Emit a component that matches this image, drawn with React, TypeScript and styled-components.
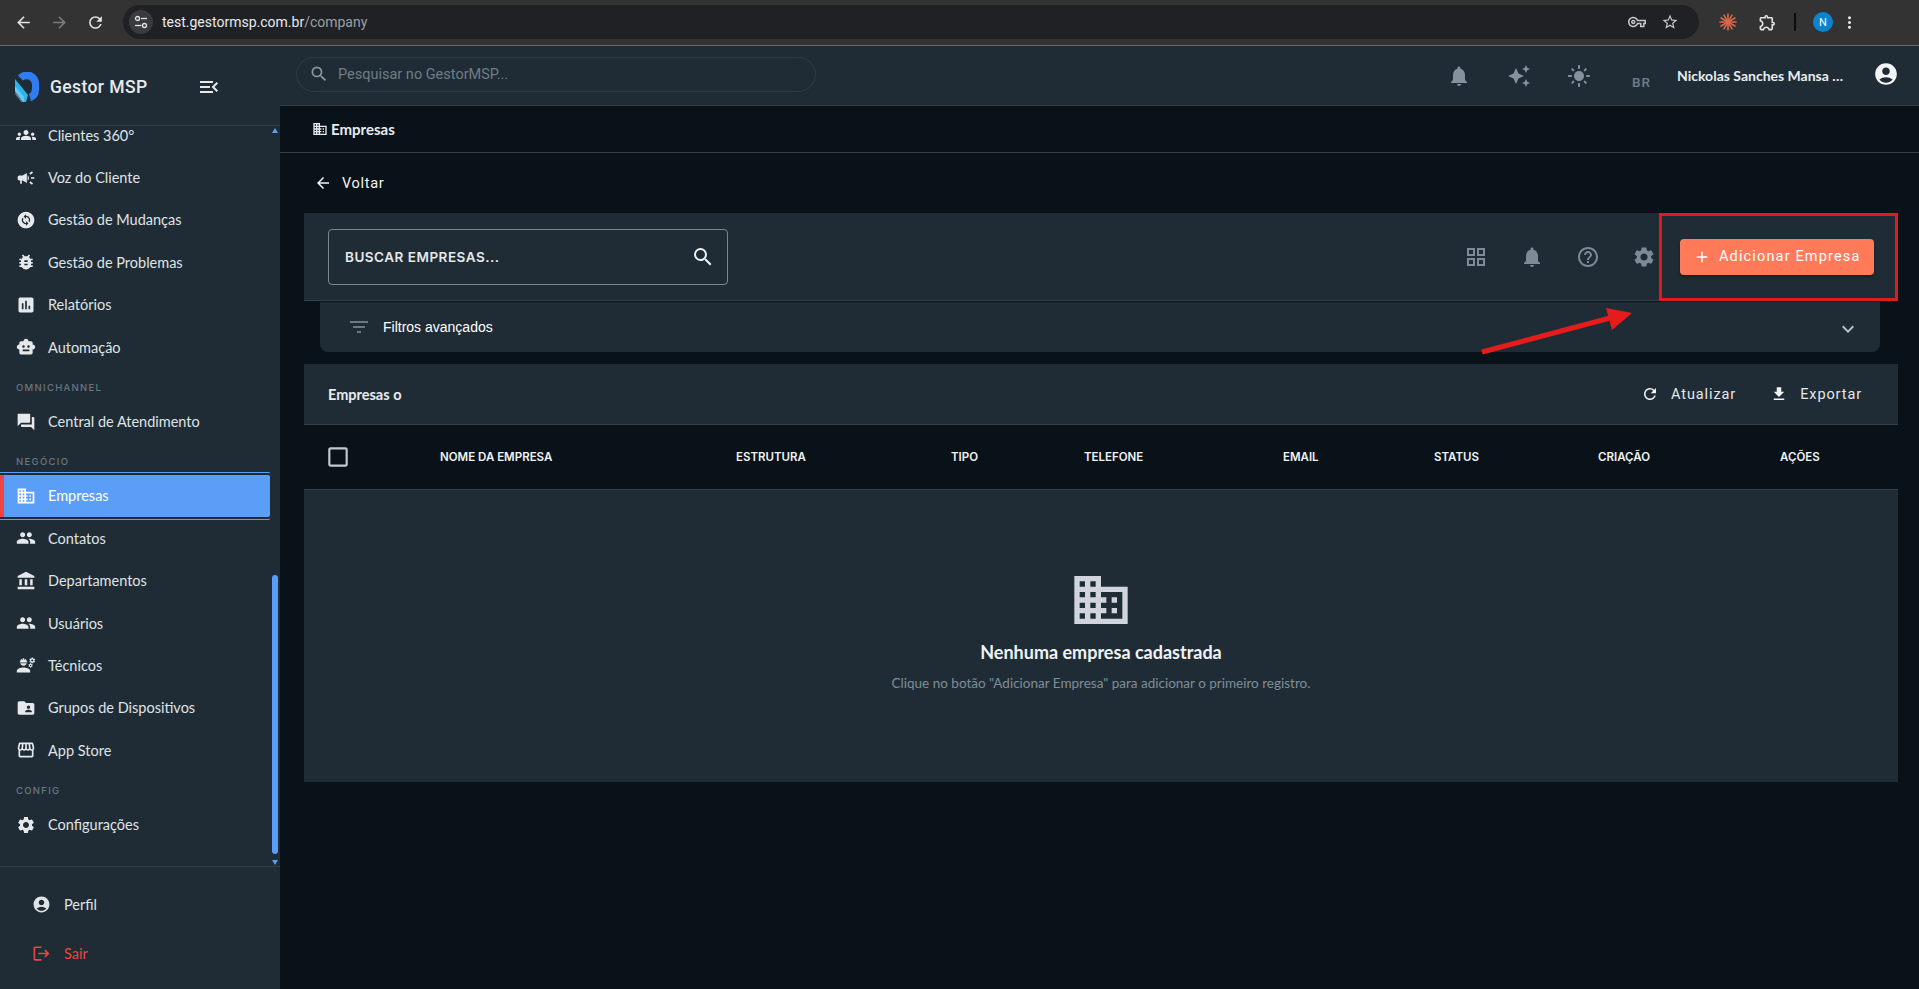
import React from 'react'
import styled, { createGlobalStyle } from 'styled-components'
import {
  MdAccountBalance,
  MdAccountCircle,
  MdAdd,
  MdArrowBack,
  MdAssessment,
  MdAutoAwesome,
  MdBugReport,
  MdBusiness,
  MdCampaign,
  MdChangeCircle,
  MdCheckBoxOutlineBlank,
  MdEngineering,
  MdExpandMore,
  MdFileDownload,
  MdFilterList,
  MdFolderShared,
  MdForum,
  MdGridView,
  MdHelpOutline,
  MdLightMode,
  MdLogout,
  MdMenuOpen,
  MdMoreVert,
  MdNotifications,
  MdOutlineExtension,
  MdOutlineVpnKey,
  MdPeople,
  MdRefresh,
  MdSearch,
  MdSettings,
  MdSmartToy,
  MdStarBorder,
  MdStorefront,
  MdArrowForward,
  MdGroups,
} from 'react-icons/md'

const BODY_FONT = `'Lato', 'Noto Sans', sans-serif`
const PANEL = '#202c35'
const PAGE = '#0a1219'
const LINE = '#33404a'

const GlobalStyle = createGlobalStyle`
  html, body {
    margin: 0;
    padding: 0;
    height: 100%;
    overflow: hidden;
    background: ${PAGE};
  }
  * { box-sizing: border-box; }
`

const Frame = styled.div`
  display: flex;
  flex-direction: column;
  position: relative;
  width: 1919px;
  height: 989px;
  overflow: hidden;
  font-family: ${BODY_FONT};
`

/* browser chrome */
const BrowserBar = styled.div`
  display: flex;
  align-items: center;
  height: 46px;
  padding: 5px 0 6px 11px;
  background: #333333;
  border-bottom: 1px solid #6b6b6b;
  flex: none;
`

const NavIcon = styled.span<{ $dim?: boolean }>`
  display: flex;
  align-items: center;
  justify-content: center;
  width: 24px;
  margin-right: 12px;
  font-size: 19px;
  color: ${p => (p.$dim ? '#7d7d7d' : '#e3e3e3')};
`

const AddressBar = styled.div`
  display: flex;
  align-items: center;
  width: 1576px;
  height: 34px;
  margin-left: 4px;
  padding: 0 16px 0 6px;
  border-radius: 17px;
  background: #202124;
  font-family: 'Roboto', sans-serif;
  font-size: 14px;
  color: #e8eaed;
`

const SiteChip = styled.span`
  display: flex;
  align-items: center;
  justify-content: center;
  width: 24px;
  height: 24px;
  margin-right: 9px;
  border-radius: 50%;
  background: #3a3b3e;
`

const UrlPath = styled.span`
  color: #9aa0a6;
`

const AddressActions = styled.div`
  display: flex;
  align-items: center;
  gap: 15px;
  margin-left: auto;
  padding-right: 4px;
  font-size: 18px;
  color: #c7c7c7;
`

const BrowserTools = styled.div`
  display: flex;
  align-items: center;
  margin-left: 20px;
`

const ToolDivider = styled.span`
  width: 2px;
  height: 18px;
  margin: 0 17px 0 15px;
  background: #0c0c0c;
`

const ProfileBadge = styled.span`
  display: flex;
  align-items: center;
  justify-content: center;
  width: 20px;
  height: 20px;
  border-radius: 50%;
  background: #0b84d0;
  color: #ffffff;
  font-family: 'Roboto', sans-serif;
  font-size: 11px;
`

/* app shell */
const Shell = styled.div`
  display: flex;
  flex: 1;
  min-height: 0;
`

const Sidebar = styled.aside`
  display: flex;
  flex-direction: column;
  width: 280px;
  flex: none;
  background: ${PANEL};
`

const Brand = styled.div`
  display: flex;
  align-items: center;
  height: 80px;
  padding: 2px 0 0 15px;
  border-bottom: 1px solid ${LINE};
  flex: none;
`

const BrandName = styled.span`
  margin-left: 11px;
  font-family: 'Roboto', sans-serif;
  font-size: 17.5px;
  font-weight: 500;
  letter-spacing: 0.4px;
  color: #e6eaed;
`

const BrandToggle = styled.span`
  display: flex;
  margin-left: 50px;
  font-size: 24px;
  color: #e6eaed;
`

const NavScroll = styled.nav`
  position: relative;
  flex: 1;
  min-height: 0;
  overflow: hidden;
  border-bottom: 1px solid ${LINE};
`

const NavList = styled.div`
  display: flex;
  flex-direction: column;
  margin-top: -12px;
`

const NavItem = styled.div<{ $active?: boolean }>`
  position: relative;
  display: flex;
  align-items: center;
  gap: 12px;
  width: 270px;
  height: 42.4px;
  padding-left: 16px;
  font-size: 14.5px;
  color: ${p => (p.$active ? '#ffffff' : '#dfe3e6')};
  background: ${p => (p.$active ? '#5b9ef8' : 'transparent')};
  ${p =>
    p.$active &&
    `
    border-left: 4px solid #ef4444;
    padding-left: 12px;
    border-radius: 0 2px 2px 0;
    outline: 1px solid #5b9ef8;
    outline-offset: 2px;
    clip-path: inset(-3px 0 -3px 0);
  `}
  svg {
    flex: none;
    font-size: 20px;
    color: ${p => (p.$active ? '#ffffff' : '#e6e9ec')};
  }
`

const NavSection = styled.div`
  display: flex;
  align-items: center;
  height: 32px;
  padding: 6px 0 0 16px;
  font-family: 'Inter', sans-serif;
  font-size: 9.5px;
  font-weight: 500;
  letter-spacing: 1.3px;
  color: #6b7680;
`

const ScrollThumb = styled.span`
  position: absolute;
  top: 449px;
  right: 2px;
  width: 6px;
  height: 279px;
  border-radius: 3px;
  background: #5b9ef8;
`

const ScrollArrow = styled.span<{ $down?: boolean }>`
  position: absolute;
  right: 2px;
  ${p => (p.$down ? 'bottom: 1px;' : 'top: 2px;')}
  width: 0;
  height: 0;
  border-left: 3px solid transparent;
  border-right: 3px solid transparent;
  ${p => (p.$down ? 'border-top: 5px solid #5b9ef8;' : 'border-bottom: 5px solid #5b9ef8;')}
`

const SideFooter = styled.div`
  display: flex;
  flex-direction: column;
  height: 122px;
  padding: 16px 0 0 32px;
  gap: 7px;
  flex: none;
`

const FooterItem = styled.div<{ $danger?: boolean }>`
  display: flex;
  align-items: center;
  gap: 13px;
  height: 42px;
  font-size: 14.5px;
  color: ${p => (p.$danger ? '#ef4444' : '#dfe3e6')};
  svg {
    font-size: 19px;
  }
`

const Main = styled.main`
  display: flex;
  flex-direction: column;
  flex: 1;
  min-width: 0;
`

const TopBar = styled.header`
  display: flex;
  align-items: center;
  height: 60px;
  padding: 0 20px 0 16px;
  background: ${PANEL};
  border-bottom: 1px solid ${LINE};
  flex: none;
`

const GlobalSearch = styled.div`
  display: flex;
  align-items: center;
  gap: 9px;
  width: 520px;
  height: 35px;
  margin-top: -3px;
  padding-left: 12px;
  border: 1px solid #2f3c46;
  border-radius: 18px;
  font-family: 'Roboto', sans-serif;
  font-size: 14.5px;
  color: #6f7c87;
  svg {
    font-size: 20px;
    color: #8a96a0;
  }
`

const TopActions = styled.div`
  display: flex;
  align-items: center;
  margin-left: auto;
`

const TopIcon = styled.span`
  display: flex;
  width: 24px;
  margin-left: 36px;
  font-size: 24px;
  color: #84929e;
`

const Locale = styled.span`
  margin: 12px 0 0 41px;
  font-family: 'Roboto', sans-serif;
  font-size: 13.5px;
  font-weight: 500;
  letter-spacing: 1px;
  color: #6f7d89;
`

const UserName = styled.span`
  width: 176px;
  margin-left: 26px;
  overflow: hidden;
  font-size: 14px;
  font-weight: 700;
  white-space: nowrap;
  text-overflow: ellipsis;
  color: #e9edf0;
`

const UserIcon = styled.span`
  display: flex;
  margin: -4px 0 0 20px;
  font-size: 26px;
  color: #f2f4f6;
`

const Crumb = styled.div`
  display: flex;
  align-items: center;
  gap: 3px;
  height: 47px;
  padding-left: 32px;
  border-bottom: 1px solid ${LINE};
  font-size: 15px;
  font-weight: 700;
  color: #e8ecef;
  flex: none;
  svg {
    font-size: 16px;
  }
`

const Content = styled.div`
  display: flex;
  flex-direction: column;
  flex: 1;
  padding: 0 21px 0 24px;
`

const BackLink = styled.div`
  display: flex;
  align-items: center;
  gap: 10px;
  height: 60px;
  padding-left: 10px;
  font-family: 'Roboto', sans-serif;
  font-size: 14.5px;
  letter-spacing: 0.7px;
  color: #f2f4f6;
  svg {
    font-size: 18px;
  }
`

const Toolbar = styled.section`
  display: flex;
  align-items: center;
  height: 88px;
  padding: 0 24px;
  background: ${PANEL};
  border-bottom: 1px solid ${LINE};
`

const CompanySearch = styled.div`
  display: flex;
  align-items: center;
  justify-content: space-between;
  width: 400px;
  height: 56px;
  padding: 0 12px 0 16px;
  border: 1px solid #7b858d;
  border-radius: 4px;
  font-family: 'Inter', sans-serif;
  font-size: 13.5px;
  font-weight: 600;
  letter-spacing: 0.5px;
  color: #e4e8eb;
  svg {
    font-size: 24px;
    color: #eef1f3;
  }
`

const ToolbarActions = styled.div`
  display: flex;
  align-items: center;
  margin-left: auto;
`

const ToolIcon = styled.span`
  display: flex;
  justify-content: center;
  width: 24px;
  margin-right: 32px;
  font-size: 24px;
  color: #7d8b96;
`

const AddButton = styled.button`
  display: flex;
  align-items: center;
  gap: 8px;
  width: 194px;
  height: 36px;
  padding: 0 0 0 13px;
  margin: 0 0 0 -8px;
  border: 0;
  border-radius: 4px;
  background: #ff7a59;
  box-shadow: 0 2px 3px rgba(0, 0, 0, 0.35);
  font-family: 'Roboto', sans-serif;
  font-size: 14.5px;
  letter-spacing: 1.15px;
  color: #ffffff;
  svg {
    font-size: 18px;
  }
`

const FilterBar = styled.div`
  display: flex;
  align-items: center;
  height: 50px;
  margin: 1px 18px 0 16px;
  padding: 0 20px 0 27px;
  border-radius: 0 0 8px 8px;
  background: ${PANEL};
  font-family: 'Liberation Sans', sans-serif;
  font-size: 14px;
  color: #ffffff;
  svg {
    font-size: 24px;
  }
`

const FilterIcon = styled.span`
  display: flex;
  margin-right: 12px;
  color: #6d7882;
`

const FilterChevron = styled.span`
  display: flex;
  margin: 4px 0 0 auto;
  color: #b8c0c6;
`

const TableTitleBar = styled.section`
  display: flex;
  align-items: center;
  height: 61px;
  margin-top: 12px;
  padding: 0 24px;
  background: ${PANEL};
  border-bottom: 1px solid ${LINE};
`

const TableTitle = styled.span`
  font-size: 14.5px;
  font-weight: 700;
  color: #e8ecef;
`

const TableActions = styled.div`
  display: flex;
  gap: 34px;
  margin-left: auto;
  padding-right: 12px;
`

const TextAction = styled.span`
  display: flex;
  align-items: center;
  gap: 12px;
  font-family: 'Roboto', sans-serif;
  font-size: 14.5px;
  letter-spacing: 0.9px;
  color: #e4e8eb;
  svg {
    font-size: 18px;
    color: #f2f4f6;
  }
`

const HeadRow = styled.div`
  display: grid;
  grid-template-columns: 136px 296px 215px 133px 199px 151px 164px 182px 118px;
  align-items: center;
  height: 65px;
  border-bottom: 1px solid ${LINE};
`

const HeadCell = styled.span`
  font-family: 'Inter', sans-serif;
  font-size: 11.5px;
  font-weight: 600;
  color: #f0f3f5;
`

const CheckCell = styled.span`
  display: flex;
  padding-left: 21px;
  font-size: 26px;
  color: #c4c9cd;
`

const EmptyState = styled.section`
  display: flex;
  flex-direction: column;
  align-items: center;
  height: 292px;
  padding-top: 78px;
  background: ${PANEL};
`

const EmptyIcon = styled.span`
  display: flex;
  font-size: 64px;
  color: #d0d5dd;
`

const EmptyTitle = styled.h2`
  margin: 9px 0 0;
  font-size: 18px;
  font-weight: 700;
  color: #f0f3f5;
`

const EmptyHint = styled.p`
  margin: 12px 0 0;
  font-size: 13.5px;
  color: #7f8d98;
`

/* red marks someone drew over the screenshot */
const MarkBox = styled.div`
  position: absolute;
  left: 1659px;
  top: 213px;
  width: 239px;
  height: 88px;
  border: 3px solid #e01b1b;
`

const MarkArrow = styled.svg`
  position: absolute;
  left: 1470px;
  top: 295px;
`

const TuneGlyph = () => (
  <svg width="14" height="14" viewBox="0 0 14 14" fill="none" stroke="#e3e3e3" strokeWidth="1.3">
    <circle cx="3.5" cy="3.5" r="2" />
    <path d="M7 3.5h6" />
    <circle cx="10.5" cy="10.5" r="2" />
    <path d="M1 10.5h6.5" />
  </svg>
)

const SparkGlyph = () => (
  <svg width="18" height="18" viewBox="0 0 18 18" stroke="#d9694a" strokeWidth="1.6" strokeLinecap="round">
    {[0, 30, 60, 90, 120, 150].map(a => {
      const r = (a * Math.PI) / 180
      const dx = Math.cos(r) * 8
      const dy = Math.sin(r) * 8
      return <line key={a} x1={9 - dx} y1={9 - dy} x2={9 + dx} y2={9 + dy} />
    })}
  </svg>
)

const LogoMark = () => (
  <svg width="24" height="30" viewBox="0 0 24 30">
    <path d="M3 3.5A12 12 0 0 1 24 12v6a12 12 0 0 1-8 11.2L14 22a6 6 0 0 0 3-5v-5a5.5 5.5 0 0 0-9-3.5Z" fill="#2f7df0" />
    <path d="M0 7l13 16-2 7H8L0 19Z" fill="#2bb5f0" />
    <path d="M0 14l9 11v5H6l-6-8Z" fill="#d8f2fd" opacity="0.35" />
  </svg>
)

type MenuEntry = { section: string } | { label: string; icon: React.ReactNode; active?: boolean }

const menu: MenuEntry[] = [
  { label: 'Clientes 360°', icon: <MdGroups /> },
  { label: 'Voz do Cliente', icon: <MdCampaign /> },
  { label: 'Gestão de Mudanças', icon: <MdChangeCircle /> },
  { label: 'Gestão de Problemas', icon: <MdBugReport /> },
  { label: 'Relatórios', icon: <MdAssessment /> },
  { label: 'Automação', icon: <MdSmartToy /> },
  { section: 'OMNICHANNEL' },
  { label: 'Central de Atendimento', icon: <MdForum /> },
  { section: 'NEGÓCIO' },
  { label: 'Empresas', icon: <MdBusiness />, active: true },
  { label: 'Contatos', icon: <MdPeople /> },
  { label: 'Departamentos', icon: <MdAccountBalance /> },
  { label: 'Usuários', icon: <MdPeople /> },
  { label: 'Técnicos', icon: <MdEngineering /> },
  { label: 'Grupos de Dispositivos', icon: <MdFolderShared /> },
  { label: 'App Store', icon: <MdStorefront /> },
  { section: 'CONFIG' },
  { label: 'Configurações', icon: <MdSettings /> },
]

const columns = ['NOME DA EMPRESA', 'ESTRUTURA', 'TIPO', 'TELEFONE', 'EMAIL', 'STATUS', 'CRIAÇÃO', 'AÇÕES']

export default function App() {
  return (
    <Frame>
      <GlobalStyle />
      <BrowserBar>
        <NavIcon><MdArrowBack /></NavIcon>
        <NavIcon $dim><MdArrowForward /></NavIcon>
        <NavIcon><MdRefresh /></NavIcon>
        <AddressBar>
          <SiteChip><TuneGlyph /></SiteChip>
          test.gestormsp.com.br<UrlPath>/company</UrlPath>
          <AddressActions>
            <MdOutlineVpnKey />
            <MdStarBorder />
          </AddressActions>
        </AddressBar>
        <BrowserTools>
          <SparkGlyph />
          <NavIcon style={{ margin: '0 0 0 18px' }}><MdOutlineExtension /></NavIcon>
          <ToolDivider />
          <ProfileBadge>N</ProfileBadge>
          <NavIcon style={{ margin: '0 0 0 4px' }}><MdMoreVert /></NavIcon>
        </BrowserTools>
      </BrowserBar>
      <Shell>
        <Sidebar>
          <Brand>
            <LogoMark />
            <BrandName>Gestor MSP</BrandName>
            <BrandToggle><MdMenuOpen /></BrandToggle>
          </Brand>
          <NavScroll>
            <NavList>
              {menu.map(entry =>
                'section' in entry ? (
                  <NavSection key={entry.section}>{entry.section}</NavSection>
                ) : (
                  <NavItem key={entry.label} $active={entry.active}>
                    {entry.icon}
                    {entry.label}
                  </NavItem>
                )
              )}
            </NavList>
            <ScrollArrow />
            <ScrollThumb />
            <ScrollArrow $down />
          </NavScroll>
          <SideFooter>
            <FooterItem><MdAccountCircle />Perfil</FooterItem>
            <FooterItem $danger><MdLogout />Sair</FooterItem>
          </SideFooter>
        </Sidebar>
        <Main>
          <TopBar>
            <GlobalSearch><MdSearch />Pesquisar no GestorMSP...</GlobalSearch>
            <TopActions>
              <TopIcon><MdNotifications /></TopIcon>
              <TopIcon><MdAutoAwesome /></TopIcon>
              <TopIcon><MdLightMode /></TopIcon>
              <Locale>BR</Locale>
              <UserName>Nickolas Sanches Mansa Gomes</UserName>
              <UserIcon><MdAccountCircle /></UserIcon>
            </TopActions>
          </TopBar>
          <Crumb><MdBusiness />Empresas</Crumb>
          <Content>
            <BackLink><MdArrowBack />Voltar</BackLink>
            <Toolbar>
              <CompanySearch>BUSCAR EMPRESAS...<MdSearch /></CompanySearch>
              <ToolbarActions>
                <ToolIcon><MdGridView /></ToolIcon>
                <ToolIcon><MdNotifications /></ToolIcon>
                <ToolIcon><MdHelpOutline /></ToolIcon>
                <ToolIcon><MdSettings /></ToolIcon>
                <AddButton><MdAdd />Adicionar Empresa</AddButton>
              </ToolbarActions>
            </Toolbar>
            <FilterBar>
              <FilterIcon><MdFilterList /></FilterIcon>
              Filtros avançados
              <FilterChevron><MdExpandMore /></FilterChevron>
            </FilterBar>
            <TableTitleBar>
              <TableTitle>Empresas o</TableTitle>
              <TableActions>
                <TextAction><MdRefresh />Atualizar</TextAction>
                <TextAction><MdFileDownload />Exportar</TextAction>
              </TableActions>
            </TableTitleBar>
            <HeadRow>
              <CheckCell><MdCheckBoxOutlineBlank /></CheckCell>
              {columns.map(c => <HeadCell key={c}>{c}</HeadCell>)}
            </HeadRow>
            <EmptyState>
              <EmptyIcon><MdBusiness /></EmptyIcon>
              <EmptyTitle>Nenhuma empresa cadastrada</EmptyTitle>
              <EmptyHint>Clique no botão "Adicionar Empresa" para adicionar o primeiro registro.</EmptyHint>
            </EmptyState>
          </Content>
        </Main>
      </Shell>
      <MarkBox />
      <MarkArrow width="170" height="65" viewBox="0 0 170 65">
        <path d="M12 57 L140 23" stroke="#e51c1c" strokeWidth="5" />
        <path d="M162 18 L136 13 L142 35 Z" fill="#e51c1c" />
      </MarkArrow>
    </Frame>
  )
}
